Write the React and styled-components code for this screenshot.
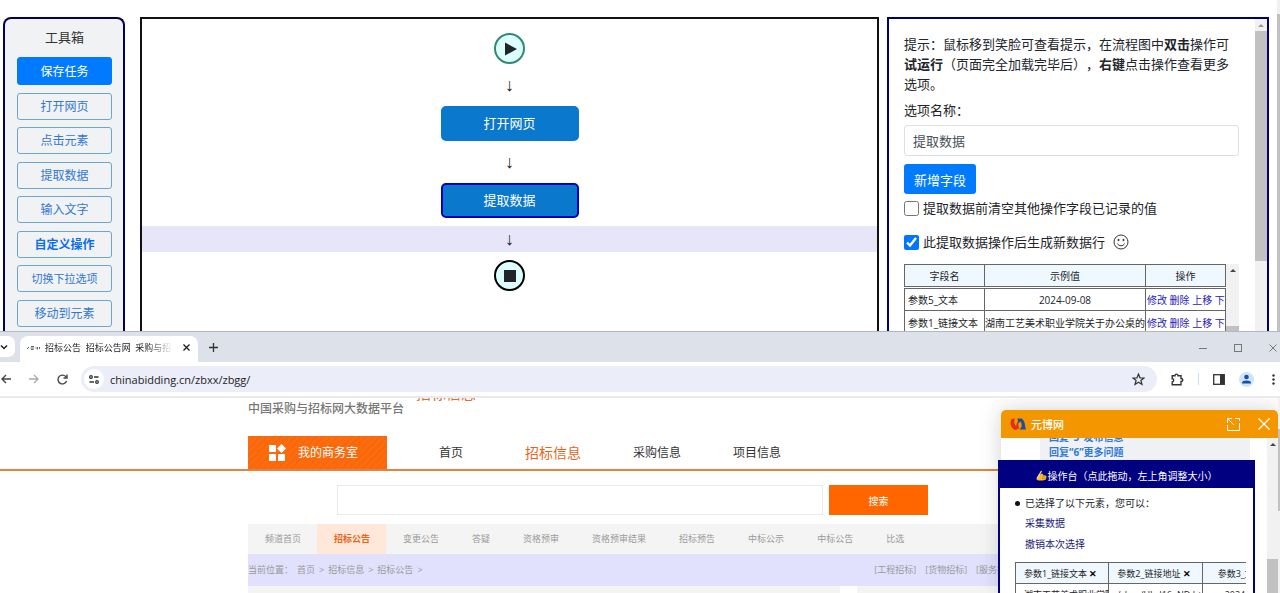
import React from "react";
import styled, { createGlobalStyle } from "styled-components";

const tools = [
  { name: "打开网页" },
  { name: "点击元素" },
  { name: "提取数据" },
  { name: "输入文字" },
  { name: "自定义操作", bold: true },
  { name: "切换下拉选项", small: true },
  { name: "移动到元素" },
];

const fields = [
  { name: "参数5_文本", value: "2024-09-08" },
  { name: "参数1_链接文本", value: "湖南工艺美术职业学院关于办公桌的采购公告" },
];

const channels = [
  "频道首页",
  "招标公告",
  "变更公告",
  "答疑",
  "资格预审",
  "资格预审结果",
  "招标预告",
  "中标公示",
  "中标公告",
  "比选",
];

const App = () => {
  return (
    <Screen>
      <GlobalStyle />
      <Designer />
      <Browser />
    </Screen>
  );
};

const Designer = () => (
  <DesignerArea>
    <Toolbox>
      <ToolboxTitle>工具箱</ToolboxTitle>
      <ToolList>
        <SaveButton>保存任务</SaveButton>
        {tools.map((t) => (
          <ToolButton key={t.name} $bold={t.bold} $small={t.small}>
            {t.name}
          </ToolButton>
        ))}
      </ToolList>
    </Toolbox>
    <Canvas>
      <Terminal $color="#2e8b6f">
        <svg width="14" height="14" viewBox="0 0 14 14">
          <path d="M2 0.5 L14 7 L2 13.5 Z" fill="#212529" />
        </svg>
      </Terminal>
      <Arrow>↓</Arrow>
      <FlowNode>打开网页</FlowNode>
      <Arrow>↓</Arrow>
      <FlowNode $selected>提取数据</FlowNode>
      <Arrow $active>↓</Arrow>
      <Terminal $color="#000">
        <svg width="12" height="12" viewBox="0 0 12 12">
          <rect width="12" height="12" fill="#212529" />
        </svg>
      </Terminal>
    </Canvas>
    <Panel>
      <PanelBody>
        <Tip>
          提示：鼠标移到笑脸可查看提示，在流程图中<b>双击</b>操作可<b>试运行</b>
          （页面完全加载完毕后），<b>右键</b>点击操作查看更多选项。
        </Tip>
        <FieldLabel htmlFor="option-name">选项名称：</FieldLabel>
        <TextInput id="option-name" defaultValue="提取数据" />
        <AddButton>新增字段</AddButton>
        <CheckRow>
          <Check type="checkbox" id="clear-fields" />
          <label htmlFor="clear-fields">提取数据前清空其他操作字段已记录的值</label>
        </CheckRow>
        <CheckRow $spaced>
          <Check type="checkbox" id="new-row" defaultChecked />
          <label htmlFor="new-row">此提取数据操作后生成新数据行</label>
          <Smile />
        </CheckRow>
        <FieldBox>
          <FieldScroll>
            <FieldTable>
              <colgroup>
                <col width="80" />
                <col width="161" />
                <col />
              </colgroup>
              <thead>
                <tr>
                  <th>字段名</th>
                  <th>示例值</th>
                  <th>操作</th>
                </tr>
              </thead>
              <tbody>
                {fields.map((f) => (
                  <tr key={f.name}>
                    <td>{f.name}</td>
                    <td>{f.value}</td>
                    <td>
                      <a href="#edit">修改</a> <a href="#delete">删除</a>{" "}
                      <a href="#up">上移</a> <a href="#down">下移</a>
                    </td>
                  </tr>
                ))}
              </tbody>
            </FieldTable>
          </FieldScroll>
          <ScrollTrack $width={13}>
            <ScrollArrow />
            <ScrollThumb $start={50} $size={30} />
          </ScrollTrack>
        </FieldBox>
      </PanelBody>
      <ScrollTrack $width={12}>
        <ScrollArrow $faded />
        <ScrollThumb $size={230} />
      </ScrollTrack>
    </Panel>
    <ScrollTrack $width={3}>
      <ScrollThumb $start={14} $size={400} />
    </ScrollTrack>
  </DesignerArea>
);

const Browser = () => (
  <BrowserWindow>
    <TabStrip>
      <TabSearch aria-label="搜索标签页">
        <svg width="8" height="6" viewBox="0 0 8 6" fill="none" stroke="#222" strokeWidth="1.5">
          <path d="M1 1.5 L4 4.5 L7 1.5" />
        </svg>
      </TabSearch>
      <Tab>
        <svg width="13" height="6" viewBox="0 0 13 6" fill="none" stroke="#666" strokeWidth="1">
          <path d="M0 4 L2 2 M3.5 3 H7 M4 1.5 H7 M4 4.5 H6.5 M8.5 3 H10 M10.5 2 V4.5 M12.5 2 V4" />
        </svg>
        <TabTitle>招标公告&nbsp; 招标公告网&nbsp; 采购与招标网</TabTitle>
        <IconButton aria-label="关闭">
          <svg width="7" height="7" viewBox="0 0 7 7" stroke="#222" strokeWidth="1.4">
            <path d="M0.5 0.5 L6.5 6.5 M6.5 0.5 L0.5 6.5" />
          </svg>
        </IconButton>
      </Tab>
      <NewTab aria-label="新标签页">
        <svg width="9" height="9" viewBox="0 0 9 9" stroke="#333" strokeWidth="1.3">
          <path d="M4.5 0 V9 M0 4.5 H9" />
        </svg>
      </NewTab>
      <WindowControls>
        <svg width="8" height="8" viewBox="0 0 8 8" stroke="#777" fill="none">
          <path d="M0 4.5 H8" />
        </svg>
        <svg width="8" height="8" viewBox="0 0 8 8" stroke="#777" fill="none">
          <rect x="0.5" y="0.5" width="7" height="7" />
        </svg>
        <svg width="8" height="8" viewBox="0 0 8 8" stroke="#777" fill="none">
          <path d="M0.5 0.5 L7.5 7.5 M7.5 0.5 L0.5 7.5" />
        </svg>
      </WindowControls>
    </TabStrip>
    <AddressBar>
      <NavIcons>
        <svg width="10" height="10" viewBox="0 0 10 10" fill="none" stroke="#444" strokeWidth="1.4">
          <path d="M10 5 H1 M5 1 L1 5 L5 9" />
        </svg>
        <svg width="10" height="10" viewBox="0 0 10 10" fill="none" stroke="#aaa" strokeWidth="1.3">
          <path d="M0 5 H9 M5 1 L9 5 L5 9" />
        </svg>
        <svg width="11" height="11" viewBox="0 0 11 11" fill="none" stroke="#444" strokeWidth="1.4">
          <path d="M9.6 7 A4.4 4.4 0 1 1 8.8 2.6 L9.8 3.6" />
          <path d="M10 0.5 V4 H6.5" />
        </svg>
      </NavIcons>
      <Omnibox>
        <SiteInfo>
          <svg width="10" height="9" viewBox="0 0 10 9" fill="none" stroke="#333" strokeWidth="1.3">
            <circle cx="2" cy="2" r="1.3" />
            <path d="M5 2 H9.5 M0.5 7 H5" />
            <circle cx="8" cy="7" r="1.3" />
          </svg>
        </SiteInfo>
        <UrlInput aria-label="地址" defaultValue="chinabidding.cn/zbxx/zbgg/" />
        <svg width="13" height="13" viewBox="0 0 13 13" fill="none" stroke="#333" strokeWidth="1.2">
          <path d="M6.5 1 L8 4.8 L12 5 L8.9 7.5 L10 11.5 L6.5 9.3 L3 11.5 L4.1 7.5 L1 5 L5 4.8 Z" />
        </svg>
      </Omnibox>
      <Extensions>
        <svg width="13" height="13" viewBox="0 0 13 13" fill="none" stroke="#333" strokeWidth="1.4">
          <path d="M1.2 2.7 H4 C4 0.6 7 0.6 7 2.7 H10 V5.5 C12.4 5.5 12.4 8.5 10 8.5 V11.8 H1.2 V9 C3.2 9 3.2 5.7 1.2 5.7 Z" />
        </svg>
        <Divider />
        <svg width="12" height="11" viewBox="0 0 12 11">
          <rect x="0.7" y="0.7" width="10.6" height="9.6" fill="none" stroke="#333" strokeWidth="1.3" />
          <rect x="7" y="1" width="4" height="9" fill="#333" />
        </svg>
        <svg width="15" height="15" viewBox="0 0 15 15">
          <circle cx="7.5" cy="7.5" r="7.5" fill="#cfe3fb" />
          <circle cx="7.5" cy="5" r="2.3" fill="#174ea6" />
          <path d="M3 11.5 V10.6 C3 7.8 12 7.8 12 10.6 V11.5 Z" fill="#174ea6" />
        </svg>
        <MenuButton aria-label="菜单">
          <svg width="3" height="11" viewBox="0 0 3 11" fill="#333">
            <circle cx="1.5" cy="1.5" r="1.2" />
            <circle cx="1.5" cy="5.5" r="1.2" />
            <circle cx="1.5" cy="9.5" r="1.2" />
          </svg>
        </MenuButton>
      </Extensions>
    </AddressBar>
    <Viewport>
      <SitePage />
      <ChatWindow />
      <Operator />
      <PageScroll>
        <ScrollThumb $start={31} $size={82} />
      </PageScroll>
    </Viewport>
  </BrowserWindow>
);

const SitePage = () => (
  <Site>
    <Container>
      <Brand>
        <Slogan>中国采购与招标网大数据平台</Slogan>
        <BrandTag>招标信息</BrandTag>
      </Brand>
    </Container>
    <NavLine>
      <Container>
        <MainNav>
          <OfficeLink href="#office">
            <svg width="17" height="17" viewBox="0 0 17 17" fill="#fff">
              <rect x="0" y="1" width="7" height="7" />
              <path d="M12.5 0 L17 4.5 L12.5 9 L8 4.5 Z" />
              <rect x="0" y="10" width="7" height="7" />
              <rect x="9" y="10" width="7" height="7" />
            </svg>
            我的商务室
          </OfficeLink>
          <NavLink href="#home">首页</NavLink>
          <NavLink href="#bid" $active>
            招标信息
          </NavLink>
          <NavLink href="#purchase">采购信息</NavLink>
          <NavLink href="#project">项目信息</NavLink>
        </MainNav>
      </Container>
    </NavLine>
    <Container>
      <SearchForm>
        <SearchInput aria-label="搜索" />
        <SearchButton type="button">搜索</SearchButton>
      </SearchForm>
      <ChannelBar>
        {channels.map((c) => (
          <Channel key={c} href="#channel" $active={c === "招标公告"}>
            {c}
          </Channel>
        ))}
      </ChannelBar>
      <Crumbs>
        <span>当前位置：</span>
        <a href="#home">首页</a>
        <span>&gt;</span>
        <a href="#bid">招标信息</a>
        <span>&gt;</span>
        <a href="#notice">招标公告</a>
        <span>&gt;</span>
        <Kinds>
          <a href="#works">[工程招标]</a>
          <a href="#goods">[货物招标]</a>
          <a href="#service">[服务招标]</a>
        </Kinds>
      </Crumbs>
      <Columns>
        <Column $grow />
        <Column />
      </Columns>
    </Container>
  </Site>
);

const ChatWindow = () => (
  <Chat>
    <ChatHeader>
      <svg width="16" height="12" viewBox="0 0 16 12">
        <path d="M1.5 1 L5 0.5 C3.8 3 4 6 6 8 L7.5 3 L9 10.5 L5 12 C0.5 10 -0.5 5 1.5 1 Z" fill="#e0301e" />
        <path d="M7.5 0.5 H11.5 C15.5 3 14.5 7 16 11.5 H9.5 L11.5 9 C12 6 11.5 4.5 10 3.5 L8.5 6 Z" fill="#1c4f9c" />
      </svg>
      <ChatName>元博网</ChatName>
      <svg width="13" height="13" viewBox="0 0 13 13" fill="none" stroke="#fff">
        <path d="M8 0.5 H12.5 V3 M12.5 5 V12.5 H0.5 V7 M1 1 L7 7 M0.5 5 V0.5 H5" />
      </svg>
      <svg width="12" height="12" viewBox="0 0 12 12" fill="none" stroke="#fff" strokeWidth="1.2">
        <path d="M0.5 0.5 L11.5 11.5 M11.5 0.5 L0.5 11.5" />
      </svg>
    </ChatHeader>
    <ChatBody>
      <Bubble>
        <p>回复“5”发布信息</p>
        <p>回复“6”更多问题</p>
      </Bubble>
      <ScrollTrack $width={11}>
        <ScrollArrow />
        <ScrollThumb $start={109} $size={60} />
      </ScrollTrack>
    </ChatBody>
  </Chat>
);

const Operator = () => (
  <OperatorBox>
    <OperatorHeader>
      <svg width="11" height="11" viewBox="0 0 11 11">
        <path d="M0.5 9.5 C1 6.5 3 4.5 6 3.5 L7.5 4.2 L6.5 5.2 L10 5.6 L10.5 7 L10 9.5 L7 10.5 L2.5 10.5 Z" fill="#fdb924" />
        <path d="M6 6.8 L10 7 M6 8.4 L9.8 8.8" stroke="#b87414" strokeWidth="0.6" />
        <path d="M1 8.5 L5.5 1" stroke="#e8e0d0" strokeWidth="1.3" />
      </svg>
      操作台（点此拖动，左上角调整大小）
    </OperatorHeader>
    <OperatorBody>
      <OperatorTitle>已选择了以下元素，您可以：</OperatorTitle>
      <OperatorLink href="#collect">采集数据</OperatorLink>
      <OperatorLink href="#undo">撤销本次选择</OperatorLink>
      <PreviewScroll>
        <PreviewTable>
          <thead>
            <tr>
              <th>
                参数1_链接文本 <Remove>✕</Remove>
              </th>
              <th>
                参数2_链接地址 <Remove>✕</Remove>
              </th>
              <th>
                参数3_文本 <Remove>✕</Remove>
              </th>
            </tr>
          </thead>
          <tbody>
            <tr>
              <td>湖南工艺美术职业学院</td>
              <td>/zbgg/ULvI16aND.html</td>
              <td>2024-09-08</td>
            </tr>
          </tbody>
        </PreviewTable>
      </PreviewScroll>
    </OperatorBody>
  </OperatorBox>
);

const Smile = () => (
  <svg width="16" height="16" viewBox="0 0 16 16" fill="none" stroke="#333">
    <circle cx="8" cy="8" r="7" />
    <path d="M4.5 9.5 C5.5 12.5 10.5 12.5 11.5 9.5" />
    <circle cx="5.5" cy="6" r="0.7" fill="#333" />
    <circle cx="10.5" cy="6" r="0.7" fill="#333" />
  </svg>
);

const GlobalStyle = createGlobalStyle`
  * {
    box-sizing: border-box;
  }
  body {
    margin: 0;
    background: #fff;
    color: #212529;
    font-family: "Open Sans", "Noto Sans CJK SC", sans-serif;
    font-size: 13px;
    text-spacing-trim: space-all;
  }
  button, input {
    font-family: inherit;
    margin: 0;
  }
  button {
    border: none;
    padding: 0;
    background: transparent;
  }
  a {
    text-decoration: none;
    color: inherit;
  }
  p {
    margin: 0;
  }
  svg {
    flex: none;
    display: block;
  }
`;

const Screen = styled.div`
  display: grid;
  grid-template-rows: minmax(0, 331fr) minmax(0, 262fr);
  height: 100vh;
  overflow: hidden;
`;

/* === flow designer === */
const DesignerArea = styled.div`
  display: flex;
  padding-left: 3px;
  overflow: hidden;
`;

const Toolbox = styled.div`
  display: flex;
  flex-direction: column;
  width: 122px;
  margin: 17px 15px 0 0;
  padding: 8px 11px 4px 12px;
  border: 2px solid #000060;
  border-bottom: none;
  border-radius: 8px 8px 0 0;
  background: #f1f2f4;
`;

const ToolboxTitle = styled.div`
  line-height: 20px;
  margin-bottom: 10px;
  text-align: center;
  color: #333;
`;

const ToolList = styled.div`
  display: flex;
  flex: 1;
  flex-direction: column;
  justify-content: space-between;
`;

const ToolButton = styled.button`
  height: 27px;
  border: 1px solid #6ba6d0;
  border-radius: 3px;
  color: ${(p) => (p.$bold ? "#0a6fe8" : "#3178d0")};
  font-size: ${(p) => (p.$small ? 11 : 12)}px;
  font-weight: ${(p) => (p.$bold ? 700 : 400)};
  line-height: 25px;
`;

const SaveButton = styled(ToolButton)`
  height: 28px;
  border-color: #007bff;
  background: #007bff;
  color: #fff;
`;

const Canvas = styled.div`
  display: flex;
  flex: 1;
  flex-direction: column;
  align-items: center;
  gap: 8px;
  margin-top: 17px;
  padding-top: 14px;
  border: 2px solid #111;
  border-bottom: none;
`;

const Terminal = styled.div`
  display: flex;
  align-items: center;
  justify-content: center;
  width: 31px;
  height: 31px;
  border: 2px solid ${(p) => p.$color};
  border-radius: 50%;
  background: #dcfffd;
`;

const Arrow = styled.div`
  align-self: stretch;
  height: 26px;
  background: ${(p) => (p.$active ? "#e6e6f8" : "transparent")};
  font-family: "Liberation Sans", sans-serif;
  font-size: 18px;
  line-height: 26px;
  text-align: center;
`;

const FlowNode = styled.div`
  width: 138px;
  height: 35px;
  border: 2px solid ${(p) => (p.$selected ? "#0000c0" : "#0a78cc")};
  border-radius: 5px;
  background: #0a78cc;
  color: #fff;
  line-height: 31px;
  text-align: center;
`;

const Panel = styled.div`
  display: flex;
  width: 382px;
  margin: 17px 8px 0;
  border: 2px solid #000070;
  border-bottom: none;
`;

const PanelBody = styled.div`
  flex: 1;
  min-width: 0;
  padding: 15px 16px 0 15px;
`;

const Tip = styled.p`
  line-height: 20px;
`;

const FieldLabel = styled.label`
  display: block;
  margin: 6px 0 5px;
  line-height: 20px;
`;

const TextInput = styled.input`
  display: block;
  width: 100%;
  height: 31px;
  padding: 0 8px;
  border: 1px solid #dcdfe3;
  border-radius: 3px;
  color: #495057;
  font-size: 13px;
`;

const AddButton = styled.button`
  display: block;
  height: 30px;
  margin: 8px 0 4px;
  padding: 0 10px;
  border-radius: 3px;
  background: #007bff;
  color: #fff;
  font-size: 13px;
`;

const CheckRow = styled.div`
  display: flex;
  align-items: center;
  gap: 4px;
  height: 20px;
  margin-top: ${(p) => (p.$spaced ? 14 : 0)}px;
  line-height: 18px;

  svg {
    margin-left: 4px;
  }
`;

const Check = styled.input`
  width: 15px;
  height: 15px;
  accent-color: #0075ff;
`;

const FieldBox = styled.div`
  display: flex;
  height: 80px;
  margin-top: 12px;
`;

const FieldScroll = styled.div`
  flex: 1;
  min-width: 0;
  overflow: hidden;
`;

const FieldTable = styled.table`
  width: 100%;
  table-layout: fixed;
  border-collapse: collapse;
  font-size: 10px;

  th,
  td {
    height: 23px;
    padding: 0;
    border: 1px solid #666;
    font-weight: 400;
    text-align: center;
    white-space: nowrap;
    overflow: hidden;
  }
  th {
    border-bottom: 3px double #666;
    background: #f0f8ff;
  }
  td:first-child {
    padding-left: 3px;
    text-align: left;
  }
  td:last-child {
    padding-left: 1px;
    text-align: left;
  }
  a {
    color: #2a22b8;
  }
`;

const ScrollTrack = styled.div`
  flex: none;
  width: ${(p) => p.$width}px;
  background: #f1f1f1;
  overflow: hidden;
`;

const ScrollArrow = styled.div`
  height: 12px;
  padding-top: 3px;

  &::before {
    content: "";
    display: block;
    width: 0;
    margin: 0 auto;
    border: 3px solid transparent;
    border-top-width: 2px;
    border-bottom: 3px solid ${(p) => (p.$faded ? "#999" : "#444")};
  }
`;

const ScrollThumb = styled.div`
  height: ${(p) => p.$size}px;
  margin-top: ${(p) => p.$start || 0}px;
  background: #c1c1c1;
`;

/* === browser window === */
const BrowserWindow = styled.div`
  display: flex;
  flex-direction: column;
  border-top: 1px solid #b4b7bd;
  background: #fff;
`;

const TabStrip = styled.div`
  display: flex;
  flex: none;
  height: 30px;
  padding-top: 4px;
  background: #dde1ea;
`;

const TabSearch = styled.button`
  display: flex;
  align-items: center;
  width: 15px;
  height: 21px;
  border-radius: 0 7px 7px 0;
  background: #fff;
`;

const Tab = styled.div`
  display: flex;
  align-items: center;
  width: 178px;
  margin-left: 5px;
  padding: 0 8px 3px 7px;
  border-radius: 8px 8px 0 0;
  background: #fff;
`;

const TabTitle = styled.span`
  flex: 1;
  min-width: 0;
  margin: 0 10px 0 5px;
  overflow: hidden;
  font-size: 9px;
  white-space: nowrap;
  mask-image: linear-gradient(to right, #000 80%, transparent);
`;

const IconButton = styled.button`
  display: flex;
`;

const NewTab = styled.button`
  display: flex;
  align-items: center;
  height: 23px;
  margin-left: 11px;
`;

const WindowControls = styled.div`
  display: flex;
  align-items: center;
  gap: 27px;
  height: 24px;
  margin-left: auto;
  padding-right: 3px;
`;

const AddressBar = styled.div`
  display: flex;
  flex: none;
  align-items: center;
  height: 36px;
  padding-right: 5px;
  border-bottom: 2px solid #e9e9ee;
`;

const NavIcons = styled.div`
  display: flex;
  align-items: center;
  gap: 18px;
  width: 81px;
  padding-left: 1px;
`;

const Omnibox = styled.div`
  display: flex;
  flex: 1;
  align-items: center;
  height: 26px;
  padding: 0 12px 0 3px;
  border-radius: 13px;
  background: #ebeef8;
`;

const SiteInfo = styled.div`
  display: flex;
  align-items: center;
  justify-content: center;
  width: 20px;
  height: 20px;
  border-radius: 50%;
  background: #fff;
`;

const UrlInput = styled.input`
  flex: 1;
  margin-left: 6px;
  padding: 0;
  border: none;
  background: transparent;
  color: #222;
  font-size: 11px;
`;

const Extensions = styled.div`
  display: flex;
  align-items: center;
  gap: 14px;
  padding-left: 14px;
`;

const Divider = styled.div`
  width: 1px;
  height: 12px;
  background: #c9dcf5;
`;

const MenuButton = styled(IconButton)`
  margin-left: 4px;
`;

const Viewport = styled.div`
  position: relative;
  flex: 1;
  min-height: 0;
  overflow: hidden;
`;

/* === bidding site === */
const Site = styled.div`
  font-size: 12px;
`;

const Container = styled.div`
  width: 61.25%;
  margin: 0 auto;
`;

const Brand = styled.div`
  display: flex;
  height: 38px;
`;

const Slogan = styled.div`
  color: #777;
  font-weight: 500;
  line-height: 22px;
`;

const BrandTag = styled.div`
  display: flex;
  align-items: flex-end;
  height: 3px;
  margin-left: 12px;
  overflow: hidden;
  color: #e07030;
  font-size: 15px;
  line-height: 16px;
`;

const NavLine = styled.div`
  border-bottom: 2px solid #e08440;
`;

const MainNav = styled.nav`
  display: flex;
  align-items: center;
  gap: 52px;
  height: 33px;
  line-height: 30px;
`;

const NavLink = styled.a`
  margin-left: ${(p) => (p.$active ? 10 : 0)}px;
  color: ${(p) => (p.$active ? "#e8661a" : "#333")};
  font-size: ${(p) => (p.$active ? 14 : 12)}px;
`;

const OfficeLink = styled.a`
  display: flex;
  align-items: center;
  align-self: stretch;
  gap: 12px;
  width: 139px;
  padding-left: 21px;
  background: repeating-linear-gradient(135deg, #ff6a0a 0 3px, #f4690f 3px 5px);
  color: #fff;
`;

const SearchForm = styled.form`
  display: flex;
  gap: 6px;
  padding: 14px 0 9px 89px;
`;

const SearchInput = styled.input`
  flex: 0 1 486px;
  height: 30px;
  border: 1px solid #e8ebee;
`;

const SearchButton = styled.button`
  width: 99px;
  background: #ff6600;
  color: #fff;
  font-size: 10px;
`;

const ChannelBar = styled.nav`
  display: flex;
  background: #f4f4f4;
  color: #999;
  font-size: 9px;
  line-height: 30px;
`;

const Channel = styled.a`
  padding: 0 16px 0 17px;
  white-space: nowrap;
  ${(p) => p.$active && "background: #ffe8d9; color: #e8661a; font-weight: 700;"}
`;

const Crumbs = styled.div`
  display: flex;
  gap: 4px;
  height: 32px;
  background: #e2e1fd;
  color: #999;
  font-size: 9px;
  line-height: 31px;
  white-space: nowrap;
`;

const Kinds = styled.div`
  display: flex;
  gap: 9px;
  margin-left: auto;
  padding-right: 14px;
`;

const Columns = styled.div`
  display: flex;
  gap: 17px;
  height: 40px;
`;

const Column = styled.div`
  flex: ${(p) => (p.$grow ? "1" : "0 0 175px")};
  background: #f4f4f4;
`;

const PageScroll = styled.div`
  position: absolute;
  top: 0;
  right: 0;
  width: 2px;
  height: 100%;
  background: #f1f1f1;
  overflow: hidden;
`;

/* === chat window over the page === */
const Chat = styled.div`
  position: absolute;
  top: 12px;
  right: 2px;
  bottom: 0;
  display: flex;
  flex-direction: column;
  width: 277px;
  border-radius: 5px 5px 0 0;
  background: #fff;
  box-shadow: 0 0 22px rgba(0, 0, 0, 0.18);
`;

const ChatHeader = styled.div`
  display: flex;
  flex: none;
  align-items: center;
  height: 28px;
  padding: 0 8px 0 9px;
  border-radius: 5px 5px 0 0;
  background: #f49600;
  color: #fff;

  svg:last-child {
    margin-left: 18px;
  }
`;

const ChatName = styled.div`
  flex: 1;
  margin-left: 5px;
  font-size: 11px;
  font-weight: 500;
`;

const ChatBody = styled.div`
  display: flex;
  flex: 1;
  justify-content: space-between;
  min-height: 0;
  overflow: hidden;
`;

const Bubble = styled.div`
  display: flex;
  flex: 1;
  flex-direction: column;
  margin: -8px 17px 0 39px;
  padding-left: 9px;
  background: #eff1f4;
  color: #2f7ad8;
  font-size: 10px;
  font-weight: 700;
  line-height: 15px;
`;

/* === floating operator console === */
const OperatorBox = styled.div`
  position: absolute;
  top: 62px;
  right: 25px;
  bottom: -20px;
  width: 257px;
  border: 2px solid #000080;
  background: #fff;
  font-size: 10px;
`;

const OperatorHeader = styled.div`
  display: flex;
  align-items: center;
  justify-content: center;
  gap: 1px;
  height: 26px;
  background: #000080;
  color: #fff;
`;

const OperatorBody = styled.div`
  padding: 5px 7px 0 15px;
`;

const OperatorTitle = styled.div`
  display: flex;
  align-items: center;
  gap: 5px;
  line-height: 20px;

  &::before {
    content: "";
    width: 5px;
    height: 5px;
    border-radius: 50%;
    background: #111;
  }
`;

const OperatorLink = styled.a`
  display: block;
  padding-left: 10px;
  color: #1c1c78;
  line-height: 21px;
`;

const PreviewScroll = styled.div`
  margin-top: 7px;
  overflow: hidden;
`;

const PreviewTable = styled.table`
  width: 281px;
  table-layout: fixed;
  border-collapse: collapse;
  font-size: 9px;

  th,
  td {
    height: 21px;
    padding: 0 0 0 8px;
    border: 1px solid #666;
    font-weight: 400;
    text-align: left;
    white-space: nowrap;
    overflow: hidden;
  }
  th {
    background: #f0f8ff;
  }
  th:last-child {
    padding-left: 15px;
  }
  td:last-child {
    padding-left: 22px;
  }
`;

const Remove = styled.button`
  color: #000;
  font-size: 9px;
  font-weight: 700;
`;

export default App;
